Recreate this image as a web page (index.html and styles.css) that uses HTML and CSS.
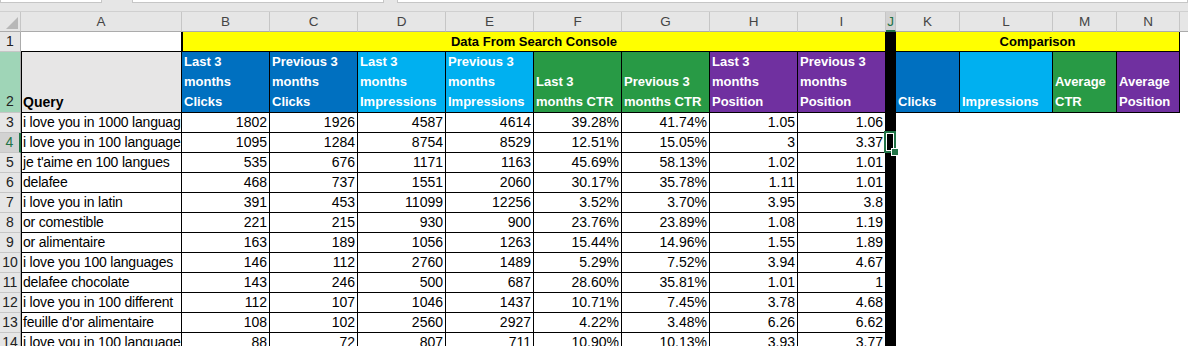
FILE: index.html
```html
<!DOCTYPE html>
<html>
<head>
<meta charset="utf-8">
<link rel="stylesheet" href="styles.css">
</head>
<body>
<div class="sheet">
  <div class="bar"><div class="box b1"></div><div class="box b2"></div><div class="box b3"></div></div>

  <div class="corner"><span class="tri"></span></div>
  <div class="ch">A</div><div class="ch">B</div><div class="ch">C</div><div class="ch">D</div><div class="ch">E</div><div class="ch">F</div><div class="ch">G</div><div class="ch">H</div><div class="ch">I</div><div class="ch ch-act">J</div><div class="ch">K</div><div class="ch">L</div><div class="ch">M</div><div class="ch">N</div><div class="ch ch-rest"></div>

  <div class="rh">1</div>
  <div class="a1"></div>
  <div class="ttl ttl-main">Data From Search Console</div>
  <div class="jc"></div>
  <div class="ttl ttl-cmp">Comparison</div>
  <div class="blank"></div>

  <div class="rh rh-sel">2</div>
  <div class="hq">Query</div>
  <div class="hd dblue">Last 3<br>months<br>Clicks</div>
  <div class="hd dblue">Previous 3<br>months<br>Clicks</div>
  <div class="hd lblue">Last 3<br>months<br>Impressions</div>
  <div class="hd lblue">Previous 3<br>months<br>Impressions</div>
  <div class="hd green">Last 3<br>months CTR</div>
  <div class="hd green">Previous 3<br>months CTR</div>
  <div class="hd purple">Last 3<br>months<br>Position</div>
  <div class="hd purple">Previous 3<br>months<br>Position</div>
  <div class="jc"></div>
  <div class="hd dblue">Clicks</div>
  <div class="hd lblue">Impressions</div>
  <div class="hd green">Average<br>CTR</div>
  <div class="hd purple">Average<br>Position</div>
  <div class="blank"></div>

  <div class="rh">3</div><div class="c q">i love you in 1000 languag</div><div class="c n">1802</div><div class="c n">1926</div><div class="c n">4587</div><div class="c n">4614</div><div class="c n">39.28%</div><div class="c n">41.74%</div><div class="c n">1.05</div><div class="c n">1.06</div><div class="jc"></div><div class="blank wide"></div>
  <div class="rh rh-act">4</div><div class="c q">i love you in 100 language</div><div class="c n">1095</div><div class="c n">1284</div><div class="c n">8754</div><div class="c n">8529</div><div class="c n">12.51%</div><div class="c n">15.05%</div><div class="c n">3</div><div class="c n">3.37</div><div class="jc"></div><div class="blank wide"></div>
  <div class="rh">5</div><div class="c q">je t'aime en 100 langues</div><div class="c n">535</div><div class="c n">676</div><div class="c n">1171</div><div class="c n">1163</div><div class="c n">45.69%</div><div class="c n">58.13%</div><div class="c n">1.02</div><div class="c n">1.01</div><div class="jc"></div><div class="blank wide"></div>
  <div class="rh">6</div><div class="c q">delafee</div><div class="c n">468</div><div class="c n">737</div><div class="c n">1551</div><div class="c n">2060</div><div class="c n">30.17%</div><div class="c n">35.78%</div><div class="c n">1.11</div><div class="c n">1.01</div><div class="jc"></div><div class="blank wide"></div>
  <div class="rh">7</div><div class="c q">i love you in latin</div><div class="c n">391</div><div class="c n">453</div><div class="c n">11099</div><div class="c n">12256</div><div class="c n">3.52%</div><div class="c n">3.70%</div><div class="c n">3.95</div><div class="c n">3.8</div><div class="jc"></div><div class="blank wide"></div>
  <div class="rh">8</div><div class="c q">or comestible</div><div class="c n">221</div><div class="c n">215</div><div class="c n">930</div><div class="c n">900</div><div class="c n">23.76%</div><div class="c n">23.89%</div><div class="c n">1.08</div><div class="c n">1.19</div><div class="jc"></div><div class="blank wide"></div>
  <div class="rh">9</div><div class="c q">or alimentaire</div><div class="c n">163</div><div class="c n">189</div><div class="c n">1056</div><div class="c n">1263</div><div class="c n">15.44%</div><div class="c n">14.96%</div><div class="c n">1.55</div><div class="c n">1.89</div><div class="jc"></div><div class="blank wide"></div>
  <div class="rh">10</div><div class="c q">i love you 100 languages</div><div class="c n">146</div><div class="c n">112</div><div class="c n">2760</div><div class="c n">1489</div><div class="c n">5.29%</div><div class="c n">7.52%</div><div class="c n">3.94</div><div class="c n">4.67</div><div class="jc"></div><div class="blank wide"></div>
  <div class="rh">11</div><div class="c q">delafee chocolate</div><div class="c n">143</div><div class="c n">246</div><div class="c n">500</div><div class="c n">687</div><div class="c n">28.60%</div><div class="c n">35.81%</div><div class="c n">1.01</div><div class="c n">1</div><div class="jc"></div><div class="blank wide"></div>
  <div class="rh">12</div><div class="c q">i love you in 100 different</div><div class="c n">112</div><div class="c n">107</div><div class="c n">1046</div><div class="c n">1437</div><div class="c n">10.71%</div><div class="c n">7.45%</div><div class="c n">3.78</div><div class="c n">4.68</div><div class="jc"></div><div class="blank wide"></div>
  <div class="rh">13</div><div class="c q">feuille d'or alimentaire</div><div class="c n">108</div><div class="c n">102</div><div class="c n">2560</div><div class="c n">2927</div><div class="c n">4.22%</div><div class="c n">3.48%</div><div class="c n">6.26</div><div class="c n">6.62</div><div class="jc"></div><div class="blank wide"></div>
  <div class="rh">14</div><div class="c q">i love you in 100 language</div><div class="c n">88</div><div class="c n">72</div><div class="c n">807</div><div class="c n">711</div><div class="c n">10.90%</div><div class="c n">10.13%</div><div class="c n">3.93</div><div class="c n">3.77</div><div class="jc"></div><div class="blank wide"></div>

  <div class="active"><span class="handle"></span></div>
</div>
</body>
</html>
```
FILE: styles.css
```css
html, body {
  margin: 0;
  padding: 0;
  background: #ffffff;
  overflow: hidden;
}

body {
  font-family: "Liberation Sans", Arial, sans-serif;
  font-size: 14px;
  color: #000;
}

.sheet {
  position: relative;
  display: grid;
  grid-template-columns: 21px 161px repeat(8, 88px) 10px 64px 93px 64px 63px 1fr;
  grid-template-rows: 12px 20px 20px 61px repeat(12, 20px);
  width: 1188px;
  height: 346px;
  overflow: hidden;
}

.sheet > div {
  box-sizing: border-box;
  min-width: 0;
}

/* formula bar remnant */
.bar {
  grid-column: 1 / -1;
  background: #e6e6e6;
  display: flex;
  align-items: flex-start;
  border-bottom: 1px solid #d0d0d0;
}

.box {
  height: 3px;
  background: #fff;
  border: 1px solid #c6c6c6;
  border-top: none;
  box-sizing: border-box;
}

.b1 { width: 102px; }
.b2 { width: 252px; margin-left: 30px; }
.b3 { flex: 1; margin-left: 13px; }

/* headers */
.corner {
  background: #e6e6e6;
  border-right: 1px solid #c6c6c6;
  border-bottom: 1px solid #ababab;
  position: relative;
}

.tri {
  position: absolute;
  right: 2px;
  bottom: 2px;
  width: 0;
  height: 0;
  border-left: 12px solid transparent;
  border-bottom: 12px solid #b8b8b8;
}

.ch {
  background: #e6e6e6;
  border-right: 1px solid #c6c6c6;
  border-bottom: 1px solid #ababab;
  text-align: center;
  line-height: 19px;
  font-size: 13.5px;
  color: #444;
}

.ch-act {
  background: #d2d2d2;
  border-bottom: 2px solid #217346;
  color: #217346;
}

.ch-rest {
  border-right: none;
}

.rh {
  background: #e6e6e6;
  border-right: 1px solid #ababab;
  border-bottom: 1px solid #c6c6c6;
  color: #222;
  line-height: 19px;
  display: flex;
  align-items: flex-end;
  justify-content: center;
}

.rh-sel {
  background: #9fd5b7;
  padding-bottom: 1px;
}

.rh-act {
  background: #d2d2d2;
  color: #217346;
  border-right: 2px solid #217346;
}

/* row 1 */
.a1 {
  background: #fff;
  border-right: 1px solid #000;
  border-bottom: 1px solid #000;
}

.ttl {
  background: #ffff00;
  font-weight: bold;
  font-size: 13px;
  text-align: center;
  line-height: 19px;
  border-right: 1px solid #000;
  border-bottom: 1px solid #000;
}

.ttl-main {
  grid-column: span 8;
  border-left: 1px solid #000;
}

.ttl-cmp {
  grid-column: span 4;
}

.jc {
  background: #000;
}

.blank {
  background: #fff;
}

.wide {
  grid-column: span 5;
}

/* row 2 */
.hq {
  background: #e7e6e6;
  font-weight: bold;
  border-left: 1px solid #000;
  border-right: 1px solid #000;
  border-bottom: 1px solid #000;
  display: flex;
  align-items: flex-end;
  padding-left: 1px;
  line-height: 20px;
}

.hd {
  color: #fff;
  font-weight: bold;
  font-size: 13px;
  line-height: 20px;
  padding-left: 2px;
  border-right: 1px solid #000;
  border-bottom: 1px solid #000;
  display: flex;
  flex-direction: column;
  justify-content: flex-end;
  white-space: nowrap;
  overflow: hidden;
}

.dblue { background: #0070c0; }
.lblue { background: #00b0f0; }
.green { background: #289a45; }
.purple { background: #7030a0; }

/* data */
.c {
  border-right: 1px solid #000;
  border-bottom: 1px solid #000;
  line-height: 19px;
  padding: 0 2px 0 2px;
  white-space: nowrap;
}

.q {
  border-left: 1px solid #000;
  padding-left: 1px;
  letter-spacing: -0.2px;
}

.n {
  text-align: right;
}

/* active cell J4 */
.active {
  position: absolute;
  left: 884px;
  top: 131px;
  width: 12px;
  height: 22px;
  border: 2px solid #217346;
  box-shadow: inset 0 0 0 1px #fff;
  box-sizing: border-box;
}

.handle {
  position: absolute;
  right: -5px;
  bottom: -5px;
  width: 6px;
  height: 6px;
  background: #217346;
  border: 1px solid #fff;
}
```
